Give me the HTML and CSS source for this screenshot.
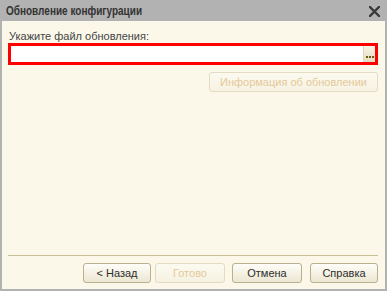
FILE: index.html
```html
<!DOCTYPE html>
<html lang="ru">
<head>
<meta charset="utf-8">
<link rel="stylesheet" href="styles.css">
</head>
<body>
<div class="window">
  <div class="titlebar">
    <span class="title">Обновление конфигурации</span>
    <svg class="close" width="11" height="11" viewBox="0 0 11 11"><path d="M1 1 L10 10 M10 1 L1 10" stroke="#3a3a3a" stroke-width="2.4" stroke-linecap="square"/></svg>
  </div>
  <div class="content">
    <div class="label">Укажите файл обновления:</div>
    <div class="field-highlight">
      <div class="field">
        <div class="input"></div>
        <div class="select-btn"><span class="dot"></span><span class="dot"></span><span class="dot"></span></div>
      </div>
    </div>
    <div class="info-row">
      <div class="btn disabled info-btn">Информация об обновлении</div>
    </div>
    <div class="spacer"></div>
    <div class="separator"></div>
    <div class="buttons">
      <div class="btn back">&lt; Назад</div>
      <div class="btn disabled done">Готово</div>
      <div class="btn cancel">Отмена</div>
      <div class="btn help">Справка</div>
    </div>
  </div>
</div>
</body>
</html>
```
FILE: styles.css
```css
html, body {
  margin: 0;
  padding: 0;
  width: 387px;
  height: 291px;
  overflow: hidden;
  background: #b2b2b2;
  font-family: "Liberation Sans", Arial, sans-serif;
}
.window {
  width: 387px;
  height: 291px;
  display: flex;
  flex-direction: column;
  background: #b2b2b2;
}
.titlebar {
  height: 21px;
  flex: none;
  display: flex;
  align-items: center;
  justify-content: space-between;
  padding: 0 7px 0 6px;
  box-sizing: border-box;
}
.title {
  font-size: 12.5px;
  font-weight: bold;
  color: #333333;
  padding-top: 1px;
  transform: scaleX(0.8);
  transform-origin: left center;
  white-space: nowrap;
}
.close {
  display: block;
  margin-top: 1px;
}
.content {
  flex: 1;
  margin: 0 2px 2px 2px;
  background: #fbf8ea;
  display: flex;
  flex-direction: column;
  padding: 8px 7px 6px 6px;
}
.label {
  font-size: 11px;
  color: #444444;
  line-height: 14px;
  padding-left: 1px;
}
.field-highlight {
  border: 3px solid #ff0000;
  height: 16px;
}
.field {
  display: flex;
  height: 16px;
  background: #ffffff;
}
.input {
  flex: 1;
}
.select-btn {
  width: 12px;
  height: 16px;
  box-sizing: border-box;
  background: linear-gradient(#f7f4e4, #e4ddc1);
  border-left: 1px solid #ddd6b8;
  display: flex;
  align-items: flex-end;
  justify-content: center;
  gap: 1px;
  padding-bottom: 4px;
}
.dot {
  width: 2px;
  height: 2px;
  background: #6b5a10;
}
.info-row {
  display: flex;
  justify-content: flex-end;
  margin-top: 7px;
}
.btn {
  height: 20px;
  box-sizing: border-box;
  border: 1px solid #b9b08f;
  border-radius: 3px;
  background: linear-gradient(#fefdf8, #ece7d2);
  font-size: 11px;
  color: #2e2e2e;
  display: flex;
  align-items: center;
  justify-content: center;
  width: 68px;
}
.btn.disabled {
  border-color: #e3dcc3;
  background: linear-gradient(#fcfaf0, #f6f2e2);
  color: #e5c999;
}
.info-btn {
  width: 169px;
}
.spacer {
  flex: 1;
}
.separator {
  height: 1px;
  background: #c7bf95;
  margin-bottom: 7px;
}
.buttons {
  display: flex;
  justify-content: flex-end;
}
.buttons .back {
  width: 68px;
}
.buttons .done {
  width: 70px;
  margin-left: 4px;
}
.buttons .cancel {
  width: 70px;
  margin-left: 7px;
}
.buttons .help {
  width: 68px;
  margin-left: 8px;
}
```
